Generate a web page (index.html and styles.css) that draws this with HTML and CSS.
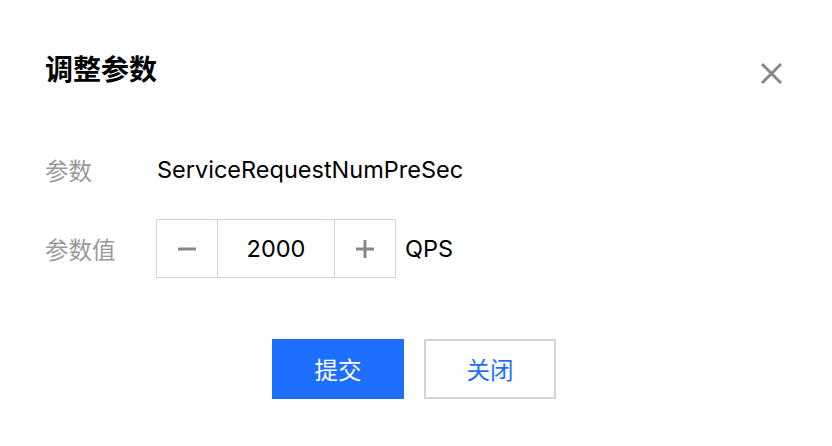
FILE: index.html
```html
<!DOCTYPE html>
<html lang="zh-CN">
<head>
    <meta charset="UTF-8">
    <meta name="viewport" content="width=device-width, initial-scale=1.0">
    <title>调整参数</title>
    <link rel="stylesheet" href="styles.css">
</head>
<body>
    <div class="dialog">
        <div class="dialog-header">
            <h3 class="dialog-title">调整参数</h3>
            <button class="close-button" aria-label="关闭">
                <svg width="23" height="23" viewBox="0 0 23 23">
                    <path d="M2 2 L21 21 M21 2 L2 21" stroke="#888" stroke-width="3" fill="none"/>
                </svg>
            </button>
        </div>
        <div class="form">
            <div class="form-row">
                <label class="form-label">参数</label>
                <div class="form-value">ServiceRequestNumPreSec</div>
            </div>
            <div class="form-row">
                <label class="form-label">参数值</label>
                <div class="form-value">
                    <div class="number-input">
                        <button class="step-button">
                            <svg width="20" height="20" viewBox="0 0 20 20"><path d="M1 10 H19" stroke="#888" stroke-width="3"/></svg>
                        </button>
                        <input class="number-field" type="text" value="2000">
                        <button class="step-button">
                            <svg width="20" height="20" viewBox="0 0 20 20"><path d="M1 10 H19 M10 1 V19" stroke="#888" stroke-width="3"/></svg>
                        </button>
                    </div>
                    <span class="unit">QPS</span>
                </div>
            </div>
        </div>
        <div class="dialog-footer">
            <button class="btn btn-primary">提交</button>
            <button class="btn btn-default">关闭</button>
        </div>
    </div>
</body>
</html>
```

FILE: styles.css
```css
body {
    margin: 0;
    background-color: #fff;
    font-family: Inter, "Noto Sans CJK SC", sans-serif;
    color: #000;
}
.dialog {
    padding: 52px 45px 0;
}
.dialog-header {
    display: flex;
    justify-content: space-between;
    align-items: center;
    height: 36px;
}
.dialog-title {
    margin: 0;
    font-size: 28px;
    font-weight: bold;
    line-height: 36px;
}
.close-button {
    border: none;
    background: none;
    padding: 0;
    margin-top: 6px;
    margin-right: 4px;
    display: flex;
    cursor: pointer;
}
.form {
    margin-top: 52px;
    display: flex;
    flex-direction: column;
    gap: 20px;
}
.form-row {
    display: flex;
    align-items: center;
    height: 59px;
}
.form-label {
    width: 111px;
    font-size: 23.5px;
    color: #999;
}
.form-value {
    display: flex;
    align-items: center;
    font-size: 23.5px;
    color: #000;
    padding-left: 1px;
}
.form-row .form-value:has(.number-input) {
    padding-left: 0;
}
.number-input {
    display: flex;
    height: 59px;
    border: 1px solid #cfd5de;
    box-sizing: border-box;
}
.step-button {
    width: 60px;
    border: none;
    background: #fff;
    display: flex;
    align-items: center;
    justify-content: center;
    padding: 0;
    cursor: pointer;
}
.number-field {
    width: 118px;
    box-sizing: border-box;
    border: none;
    border-left: 1px solid #cfd5de;
    border-right: 1px solid #cfd5de;
    text-align: center;
    font-family: inherit;
    font-size: 23.5px;
    color: #000;
    padding: 0;
    outline: none;
}
.unit {
    margin-left: 9px;
}
.dialog-footer {
    margin-top: 61px;
    display: flex;
    justify-content: center;
    gap: 20px;
    padding-right: 4px;
}
.btn {
    width: 132px;
    height: 60px;
    font-family: inherit;
    font-size: 23.5px;
    cursor: pointer;
    box-sizing: border-box;
}
.btn-primary {
    background-color: #1f6fff;
    color: #fff;
    border: none;
}
.btn-default {
    background-color: #fff;
    color: #1f6fff;
    border: 2px solid #cfd5de;
}
```
